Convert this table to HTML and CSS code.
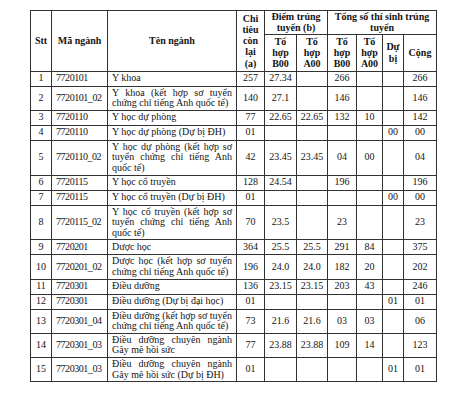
FILE: index.html
```html
<!DOCTYPE html>
<html lang="vi">
<head>
<meta charset="utf-8">
<link rel="stylesheet" href="styles.css">
</head>
<body>
<div class="page">
<table class="grid">
<colgroup>
<col class="c-stt"><col class="c-ma"><col class="c-ten"><col class="c-ct">
<col class="c-d1"><col class="c-d2"><col class="c-t1"><col class="c-t2"><col class="c-db"><col class="c-cong">
</colgroup>
<thead>
<tr class="h1">
<th rowspan="2">Stt</th>
<th rowspan="2">Mã ngành</th>
<th rowspan="2">Tên ngành</th>
<th rowspan="2" class="ct">Chi tiêu còn lại (a)</th>
<th colspan="2">Điểm trúng tuyển (b)</th>
<th colspan="4">Tổng số thí sinh trúng tuyển</th>
</tr>
<tr class="h2">
<th>Tổ hợp B00</th>
<th>Tổ hợp A00</th>
<th>Tổ hợp B00</th>
<th>Tổ hợp A00</th>
<th>Dự bị</th>
<th>Cộng</th>
</tr>
</thead>
<tbody>
<tr><td>1</td><td class="l">7720101</td><td class="n">Y khoa</td><td>257</td><td>27.34</td><td></td><td>266</td><td></td><td></td><td>266</td></tr>
<tr><td>2</td><td class="l">7720101_02</td><td class="n">Y khoa (kết hợp sơ tuyển chứng chỉ tiếng Anh quốc tế)</td><td>140</td><td>27.1</td><td></td><td>146</td><td></td><td></td><td>146</td></tr>
<tr><td>3</td><td class="l">7720110</td><td class="n">Y học dự phòng</td><td>77</td><td>22.65</td><td>22.65</td><td>132</td><td>10</td><td></td><td>142</td></tr>
<tr><td>4</td><td class="l">7720110</td><td class="n">Y học dự phòng (Dự bị ĐH)</td><td>01</td><td></td><td></td><td></td><td></td><td>00</td><td>00</td></tr>
<tr><td>5</td><td class="l">7720110_02</td><td class="n">Y học dự phòng (kết hợp sơ tuyển chứng chỉ tiếng Anh quốc tế)</td><td>42</td><td>23.45</td><td>23.45</td><td>04</td><td>00</td><td></td><td>04</td></tr>
<tr><td>6</td><td class="l">7720115</td><td class="n">Y học cổ truyền</td><td>128</td><td>24.54</td><td></td><td>196</td><td></td><td></td><td>196</td></tr>
<tr><td>7</td><td class="l">7720115</td><td class="n">Y học cổ truyền (Dự bị ĐH)</td><td>01</td><td></td><td></td><td></td><td></td><td>00</td><td>00</td></tr>
<tr><td>8</td><td class="l">7720115_02</td><td class="n">Y học cổ truyền (kết hợp sơ tuyển chứng chỉ tiếng Anh quốc tế)</td><td>70</td><td>23.5</td><td></td><td>23</td><td></td><td></td><td>23</td></tr>
<tr><td>9</td><td class="l">7720201</td><td class="n">Dược học</td><td>364</td><td>25.5</td><td>25.5</td><td>291</td><td>84</td><td></td><td>375</td></tr>
<tr><td>10</td><td class="l">7720201_02</td><td class="n">Dược học (kết hợp sơ tuyển chứng chỉ tiếng Anh quốc tế)</td><td>196</td><td>24.0</td><td>24.0</td><td>182</td><td>20</td><td></td><td>202</td></tr>
<tr><td>11</td><td class="l">7720301</td><td class="n">Điều dưỡng</td><td>136</td><td>23.15</td><td>23.15</td><td>203</td><td>43</td><td></td><td>246</td></tr>
<tr><td>12</td><td class="l">7720301</td><td class="n">Điều dưỡng (Dự bị đại học)</td><td>01</td><td></td><td></td><td></td><td></td><td>01</td><td>01</td></tr>
<tr><td>13</td><td class="l">7720301_04</td><td class="n">Điều dưỡng (kết hợp sơ tuyển chứng chỉ tiếng Anh quốc tế)</td><td>73</td><td>21.6</td><td>21.6</td><td>03</td><td>03</td><td></td><td>06</td></tr>
<tr><td>14</td><td class="l">7720301_03</td><td class="n">Điều dưỡng chuyên ngành Gây mê hồi sức</td><td>77</td><td>23.88</td><td>23.88</td><td>109</td><td>14</td><td></td><td>123</td></tr>
<tr><td>15</td><td class="l">7720301_03</td><td class="n">Điều dưỡng chuyên ngành Gây mê hồi sức (Dự bị ĐH)</td><td>01</td><td></td><td></td><td></td><td></td><td>01</td><td>01</td></tr>
</tbody>
</table>
</div>
</body>
</html>
```
FILE: styles.css
```css
html, body {
  margin: 0;
  padding: 0;
  background: #ffffff;
}
.page {
  padding: 10px 0 0 30px;
}
.grid {
  border-collapse: collapse;
  table-layout: fixed;
  width: 407px;
  font-family: "Liberation Serif", "Times New Roman", serif;
  font-size: 10px;
  color: #141414;
}
.c-stt { width: 21px; }
.c-ma { width: 56px; }
.c-ten { width: 129px; }
.c-ct { width: 28px; }
.c-d1 { width: 32px; }
.c-d2 { width: 31px; }
.c-t1 { width: 29px; }
.c-t2 { width: 26px; }
.c-db { width: 21px; }
.c-cong { width: 33px; }

.grid th, .grid td {
  border: 1px solid #333333;
  padding: 1px 2px;
  text-align: center;
  vertical-align: middle;
  overflow: hidden;
}
.grid th {
  font-weight: bold;
  line-height: 11.3px;
  padding: 0 1px;
}
.grid th.ct {
  padding: 0 3px;
}
.grid td {
  line-height: 10.6px;
}
.grid .h1 { height: 22px; }
.grid .h2 { height: 37px; }
.grid tbody tr { height: 15px; }
.grid td.l {
  text-align: left;
  padding-left: 4px;
  padding-right: 0;
  letter-spacing: -0.45px;
  white-space: nowrap;
}
.grid td.n {
  text-align: justify;
  padding: 1px 4px;
}
```
